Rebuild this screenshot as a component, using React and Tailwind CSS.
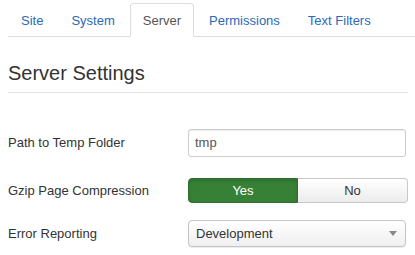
import React from 'react';

const tabs = ['Site', 'System', 'Server', 'Permissions', 'Text Filters'];

const App = () => {
  const active = 'Server';

  return (
    <div className="min-h-screen bg-white text-[13px] text-[#333]" style={{ fontFamily: '"Liberation Sans", Arial, sans-serif' }}>
      {/* Tabs */}
      <div className="pl-2 pt-[3px]">
        <ul className="flex border-b border-[#ddd]">
          {tabs.map((t) => (
            <li key={t} className="mr-[2px] -mb-px">
              {t === active ? (
                <span className="block h-[34px] px-3 leading-[34px] text-[#555] bg-white border border-[#ddd] border-b-white rounded-t-[4px]">
                  {t}
                </span>
              ) : (
                <span className="block h-[34px] px-3 leading-[34px] text-[#2a69b8] border border-transparent">
                  {t}
                </span>
              )}
            </li>
          ))}
        </ul>
      </div>

      <div className="mx-2 w-[400px]">
        {/* Heading */}
        <h2 className="pt-[24px] text-[20px] leading-[24px] text-[#333] pb-[7px] border-b border-[#e5e5e5]">
          Server Settings
        </h2>

        {/* Form */}
        <div className="mt-[36px] flex flex-col">
          <div className="flex items-center h-[28px]">
            <label className="w-[180px]">Path to Temp Folder</label>
            <div className="flex-1 h-[28px] border border-[#ccc] rounded-[3px] px-[6px] flex items-center shadow-[inset_0_1px_1px_rgba(0,0,0,0.075)] text-[#555] mr-[2px]">
              tmp
            </div>
          </div>

          <div className="flex items-center h-[25px] mt-[21px]">
            <label className="w-[180px]">Gzip Page Compression</label>
            <div className="flex-1 flex h-[25px]">
              <div className="w-[110px] flex items-center justify-center bg-[#378137] text-white rounded-l-[4px] border border-[#2f6f2f] shadow-[inset_0_2px_4px_rgba(0,0,0,0.15)]">
                Yes
              </div>
              <div className="flex-1 flex items-center justify-center text-[#333] rounded-r-[4px] border border-[#c8c8c8] border-l-0 bg-gradient-to-b from-white to-[#ececec]">
                No
              </div>
            </div>
          </div>

          <div className="flex items-center h-[27px] mt-[17px]">
            <label className="w-[180px]">Error Reporting</label>
            <div className="flex-1 h-[27px] flex items-center justify-between px-[7px] border border-[#c4c4c4] rounded-[4px] bg-gradient-to-b from-white to-[#efefef] shadow-[0_1px_1px_rgba(0,0,0,0.08)] text-[#333] mr-[2px]">
              <span>Development</span>
              <svg width="8" height="5" viewBox="0 0 8 5" className="mr-[1px]">
                <path d="M0 0 L8 0 L4 5 Z" fill="#888" />
              </svg>
            </div>
          </div>
        </div>
      </div>
    </div>
  );
};

export default App;
